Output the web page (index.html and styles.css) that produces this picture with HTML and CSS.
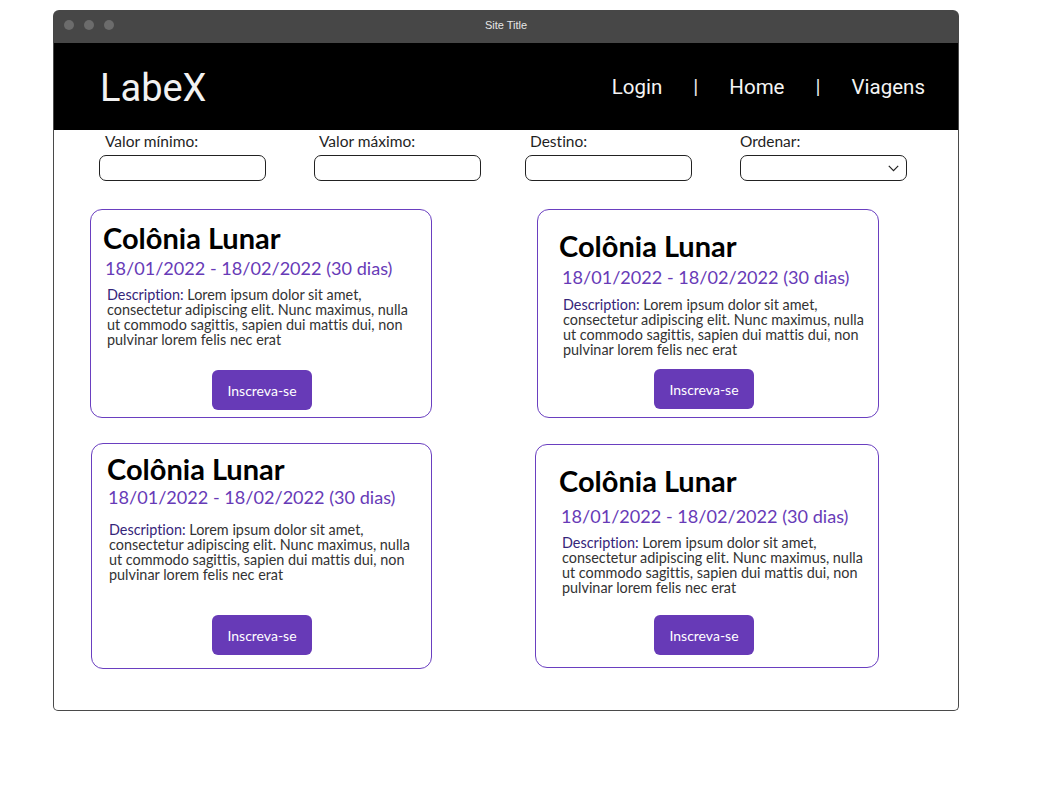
FILE: index.html
```html
<!DOCTYPE html>
<html lang="pt-BR">
<head>
<meta charset="utf-8">
<title>LabeX</title>
<link rel="stylesheet" href="styles.css">
</head>
<body>
<div class="window">
  <div class="titlebar">
    <div class="dots"><span class="dot"></span><span class="dot"></span><span class="dot"></span></div>
    <div class="site-title">Site Title</div>
    <div></div>
  </div>
  <div class="page">
    <header class="topbar">
      <div class="logo">LabeX</div>
      <nav class="nav">
        <a class="nav__link">Login</a>
        <span class="nav__sep">|</span>
        <a class="nav__link">Home</a>
        <span class="nav__sep">|</span>
        <a class="nav__link">Viagens</a>
      </nav>
    </header>

    <section class="filters">
      <div class="field field--1">
        <label class="field__label">Valor mínimo:</label>
        <input class="field__input" type="text">
      </div>
      <div class="field field--2">
        <label class="field__label">Valor máximo:</label>
        <input class="field__input" type="text">
      </div>
      <div class="field field--3">
        <label class="field__label">Destino:</label>
        <input class="field__input" type="text">
      </div>
      <div class="field field--4">
        <label class="field__label">Ordenar:</label>
        <div class="field__input field__select">
          <svg class="chevron" width="11" height="7" viewBox="0 0 11 7"><path d="M0.8 0.9 L5.5 5.6 L10.2 0.9" fill="none" stroke="#222" stroke-width="1.2"/></svg>
        </div>
      </div>
    </section>

    <section class="trips">
      <article class="trip trip--1">
        <h2 class="trip__title">Colônia Lunar</h2>
        <div class="trip__date">18/01/2022 - 18/02/2022 (30 dias)</div>
        <p class="trip__desc"><span class="trip__label">Description:</span> Lorem ipsum dolor sit amet,<br>consectetur adipiscing elit. Nunc maximus, nulla<br>ut commodo sagittis, sapien dui mattis dui, non<br>pulvinar lorem felis nec erat</p>
        <button class="trip__btn">Inscreva-se</button>
      </article>
      <article class="trip trip--2">
        <h2 class="trip__title">Colônia Lunar</h2>
        <div class="trip__date">18/01/2022 - 18/02/2022 (30 dias)</div>
        <p class="trip__desc"><span class="trip__label">Description:</span> Lorem ipsum dolor sit amet,<br>consectetur adipiscing elit. Nunc maximus, nulla<br>ut commodo sagittis, sapien dui mattis dui, non<br>pulvinar lorem felis nec erat</p>
        <button class="trip__btn">Inscreva-se</button>
      </article>
      <article class="trip trip--3">
        <h2 class="trip__title">Colônia Lunar</h2>
        <div class="trip__date">18/01/2022 - 18/02/2022 (30 dias)</div>
        <p class="trip__desc"><span class="trip__label">Description:</span> Lorem ipsum dolor sit amet,<br>consectetur adipiscing elit. Nunc maximus, nulla<br>ut commodo sagittis, sapien dui mattis dui, non<br>pulvinar lorem felis nec erat</p>
        <button class="trip__btn">Inscreva-se</button>
      </article>
      <article class="trip trip--4">
        <h2 class="trip__title">Colônia Lunar</h2>
        <div class="trip__date">18/01/2022 - 18/02/2022 (30 dias)</div>
        <p class="trip__desc"><span class="trip__label">Description:</span> Lorem ipsum dolor sit amet,<br>consectetur adipiscing elit. Nunc maximus, nulla<br>ut commodo sagittis, sapien dui mattis dui, non<br>pulvinar lorem felis nec erat</p>
        <button class="trip__btn">Inscreva-se</button>
      </article>
    </section>
  </div>
</div>
</body>
</html>
```

FILE: styles.css
```css
* { box-sizing: border-box; }

body {
  margin: 0;
  background: #ffffff;
  font-family: "Lato", "Liberation Sans", sans-serif;
  font-variant-ligatures: none;
}

.window {
  margin: 10px 0 0 53px;
  width: 906px;
}

.titlebar {
  height: 33px;
  padding-bottom: 3px;
  background: #474747;
  border-radius: 6px 6px 0 0;
  display: grid;
  grid-template-columns: 1fr auto 1fr;
  align-items: center;
}

.dots {
  display: flex;
  gap: 10px;
  padding-left: 11px;
}

.dot {
  width: 10px;
  height: 10px;
  border-radius: 50%;
  background: #6c6c6c;
}

.site-title {
  font-family: "Liberation Sans", Arial, sans-serif;
  font-size: 11px;
  line-height: 13px;
  color: #e6e6e6;
}

.page {
  height: 668px;
  border: 1px solid #4a4a4a;
  border-top: none;
  border-radius: 0 0 5px 5px;
}

.topbar {
  height: 87px;
  background: #000000;
  display: flex;
  align-items: center;
  justify-content: space-between;
  padding: 0 33px 0 46px;
  font-family: "Roboto", "Liberation Sans", sans-serif;
  color: #f2f2f2;
}

.logo {
  font-size: 38px;
  line-height: 40px;
  margin-top: 2px;
}

.nav {
  display: flex;
  align-items: center;
  gap: 31px;
  font-size: 20.5px;
  line-height: 24px;
}

.nav__link { color: #f4f4f4; }
.nav__sep { color: #e8e8e8; }

.filters {
  display: grid;
  grid-template-columns: 215px 211px 215px 167px;
  padding: 2px 0 0 45px;
}

.field {
  display: flex;
  flex-direction: column;
}

.field__label {
  font-size: 15.5px;
  line-height: 18px;
  color: #1f1f1f;
  margin: 0 0 5px 6px;
}

.field--2 .field__label,
.field--3 .field__label { margin-left: 5px; }
.field--4 .field__label { margin-left: 0; }

.field__input {
  width: 167px;
  height: 26px;
  border: 1px solid #222222;
  border-radius: 7px;
  background: #ffffff;
  padding: 0 8px;
  font: inherit;
}

.field__select {
  display: flex;
  align-items: center;
  justify-content: flex-end;
  padding-right: 7px;
}

.trips {
  display: grid;
  grid-template-columns: 344px 344px;
  grid-template-rows: 209px 226px;
  column-gap: 101px;
  row-gap: 25px;
  padding: 28px 0 0 36px;
}

.trip {
  border: 1px solid #6a3fc0;
  border-radius: 12px;
  display: flex;
  flex-direction: column;
  align-items: flex-start;
  padding: var(--pt) 0 0 var(--pl);
}

.trip--1 { width: 342px; height: 209px; --pt: 14px; --pl: 12px; --g1: 6px; --dx: 2px; --g2: 9px; --tx: 4px; --g3: 23px; --bx: 109px; }
.trip--2 { width: 342px; height: 209px; margin-left: 2px; --pt: 22px; --pl: 21px; --g1: 7px; --dx: 3px; --g2: 10px; --tx: 4px; --g3: 12px; --bx: 95px; }
.trip--3 { width: 341px; height: 226px; margin-left: 1px; --pt: 11px; --pl: 15px; --g1: 4px; --dx: 1px; --g2: 15px; --tx: 2px; --g3: 33px; --bx: 105px; }
.trip--4 { width: 344px; height: 224px; margin-top: 1px; --pt: 22px; --pl: 23px; --g1: 11px; --dx: 2px; --g2: 9px; --tx: 3px; --g3: 20px; --bx: 95px; }

.trip__title {
  margin: 0;
  font-size: 29px;
  line-height: 28px;
  font-weight: 700;
  color: #000000;
}

.trip__date {
  margin: var(--g1) 0 0 var(--dx);
  font-size: 18.1px;
  line-height: 20px;
  color: #673ab7;
}

.trip__desc {
  margin: var(--g2) 0 0 var(--tx);
  font-size: 14.4px;
  line-height: 15px;
  color: #333333;
}

.trip__label { color: #35257a; }

.trip__btn {
  margin: var(--g3) 0 0 var(--bx);
  width: 100px;
  height: 40px;
  border: none;
  border-radius: 6px;
  background: #673ab7;
  color: #ffffff;
  font-family: inherit;
  font-size: 14px;
  padding: 0;
}
```
